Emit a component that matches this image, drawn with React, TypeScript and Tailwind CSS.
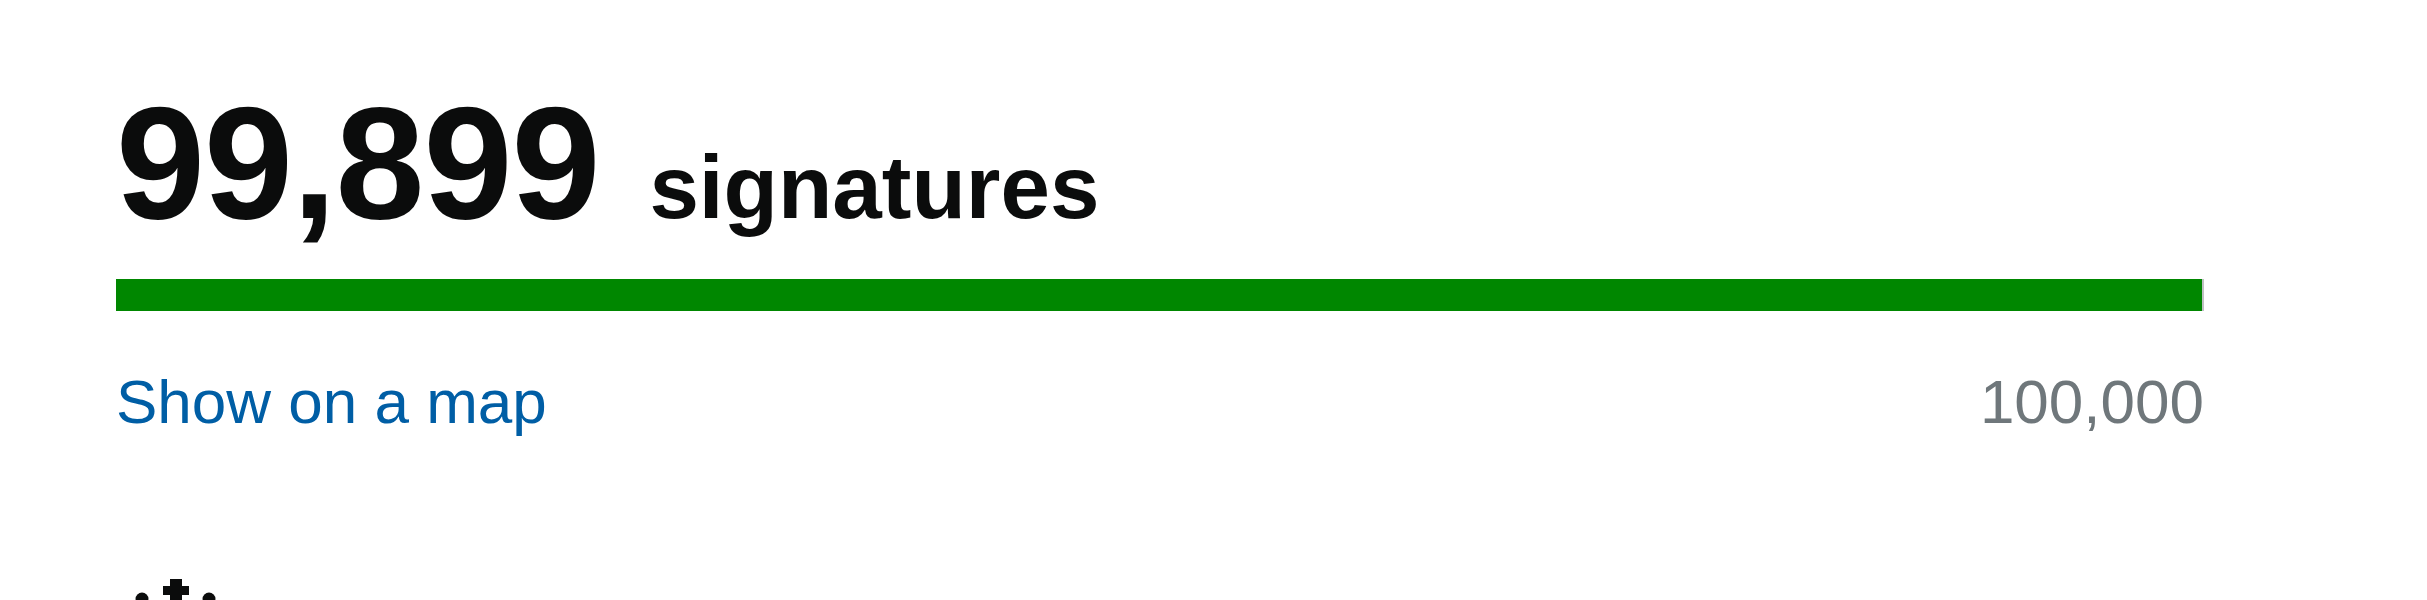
import React from "react"

const count = 99899
const target = 100000

// Top of the royal crest that sits in the footer
const CrestTop = () => (
    <svg width="120" height="80" viewBox="0 0 120 80" className="block">
        <g fill="#0b0c0c">
            <rect x="54" y="0" width="12" height="40" />
            <rect x="47" y="7" width="26" height="9" />
            <circle cx="26" cy="20" r="6.5" />
            <circle cx="93" cy="20" r="6.5" />
            <path d="M20 30 Q40 22 60 24 Q80 22 100 30 L96 70 L24 70 Z" />
        </g>
    </svg>
)

export default function App() {
    const pct = (count / target) * 100

    return (
        <div className="min-h-screen bg-white text-[#0b0c0c] font-['Liberation_Sans',Arial,sans-serif]">
            <div className="pl-[116px] pt-[83px] w-[2204px]">
                <div className="flex items-baseline font-bold leading-none">
                    <span className="text-[160px] tracking-[-1px]">99,899</span>
                    <span className="text-[89px] ml-[50px]">signatures</span>
                </div>

                <div className="mt-[36px] h-[32px] w-full bg-[#bfc1c3]">
                    <div className="h-full bg-[#008700]" style={{ width: `${pct}%` }} />
                </div>

                <div className="mt-[60px] flex justify-between text-[62px] leading-none">
                    <a href="#" className="text-[#005ea5]">Show on a map</a>
                    <span className="text-[#6f777b]">100,000</span>
                </div>

                <div className="mt-[146px]">
                    <CrestTop />
                </div>
            </div>
        </div>
    )
}
